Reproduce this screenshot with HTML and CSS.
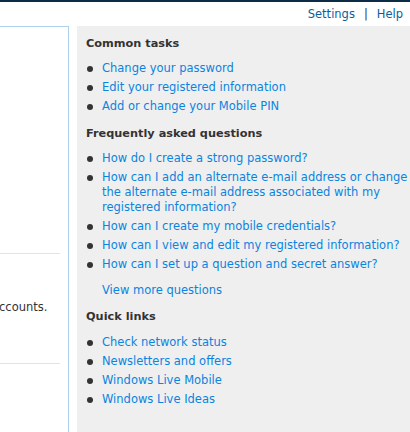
FILE: index.html
```html
<!DOCTYPE html>
<html>
<head>
<meta charset="utf-8">
<link rel="stylesheet" href="styles.css">
</head>
<body>
<div class="topbar"></div>
<div class="header">
  <a class="toplink" href="#">Settings</a><span class="sep">|</span><a class="toplink" href="#">Help</a>
</div>
<div class="main">
  <div class="leftcol">
    <div class="leftinner">
      <div class="rule rule1"></div>
      <p class="lefttext">accounts.</p>
      <div class="rule rule2"></div>
    </div>
  </div>
  <div class="panel">
    <h3 class="heading">Common tasks</h3>
    <ul class="links">
      <li><a href="#">Change your password</a></li>
      <li><a href="#">Edit your registered information</a></li>
      <li><a href="#">Add or change your Mobile PIN</a></li>
    </ul>
    <h3 class="heading">Frequently asked questions</h3>
    <ul class="links faq">
      <li><a href="#">How do I create a strong password?</a></li>
      <li><a href="#">How can I add an alternate e-mail address or change the alternate e-mail address associated with my registered information?</a></li>
      <li><a href="#">How can I create my mobile credentials?</a></li>
      <li><a href="#">How can I view and edit my registered information?</a></li>
      <li><a href="#">How can I set up a question and secret answer?</a></li>
    </ul>
    <p class="more"><a href="#">View more questions</a></p>
    <h3 class="heading heading-quick">Quick links</h3>
    <ul class="links">
      <li><a href="#">Check network status</a></li>
      <li><a href="#">Newsletters and offers</a></li>
      <li><a href="#">Windows Live Mobile</a></li>
      <li><a href="#">Windows Live Ideas</a></li>
    </ul>
  </div>
</div>
</body>
</html>
```

FILE: styles.css
```css
html, body {
  margin: 0;
  padding: 0;
  background: #ffffff;
  font-family: "DejaVu Sans", Verdana, sans-serif;
  font-size: 11.5px;
  color: #333333;
  height: 432px;
  overflow: hidden;
}
a {
  text-decoration: none;
}
.topbar {
  height: 2px;
  background: #0c2b44;
}
.header {
  height: 24px;
  display: flex;
  justify-content: flex-end;
  align-items: center;
  padding-right: 7px;
  box-sizing: border-box;
}
.toplink {
  color: #0a5e9e;
}
.sep {
  color: #333333;
  margin: 0 9px;
}
.main {
  display: flex;
  gap: 8px;
  height: 406px;
}
.leftcol {
  width: 69px;
  flex: none;
  box-sizing: border-box;
  border-top: 1px solid #acd2ee;
  border-right: 1px solid #acd2ee;
  overflow: hidden;
}
.leftinner {
  padding-top: 226px;
}
.rule {
  width: 60px;
  height: 1px;
  background: #dbe5ee;
}
.lefttext {
  margin: 46px 0 0 -8px;
  line-height: 15px;
  white-space: nowrap;
}
.rule2 {
  margin-top: 48px;
}
.panel {
  flex: 1;
  background: #efefef;
  padding: 10px 0 0 9px;
}
.heading {
  margin: 0 0 10px 0;
  font-size: 11.3px;
  font-weight: bold;
  line-height: 15px;
  color: #333333;
}
.heading-quick {
  margin-bottom: 11px;
}
.links {
  list-style: none;
  margin: 0 0 12px 0;
  padding: 0;
}
.links.faq {
  margin-bottom: 11px;
}
.links li {
  position: relative;
  padding-left: 16px;
  margin-bottom: 4px;
  line-height: 15px;
}
.links li::before {
  content: "";
  position: absolute;
  left: 1px;
  top: 5px;
  width: 6px;
  height: 6px;
  border-radius: 50%;
  background: #333333;
}
.links a, .more a {
  color: #0a84e0;
}
.more {
  margin: 11px 0 11px 16px;
  line-height: 15px;
}
```
